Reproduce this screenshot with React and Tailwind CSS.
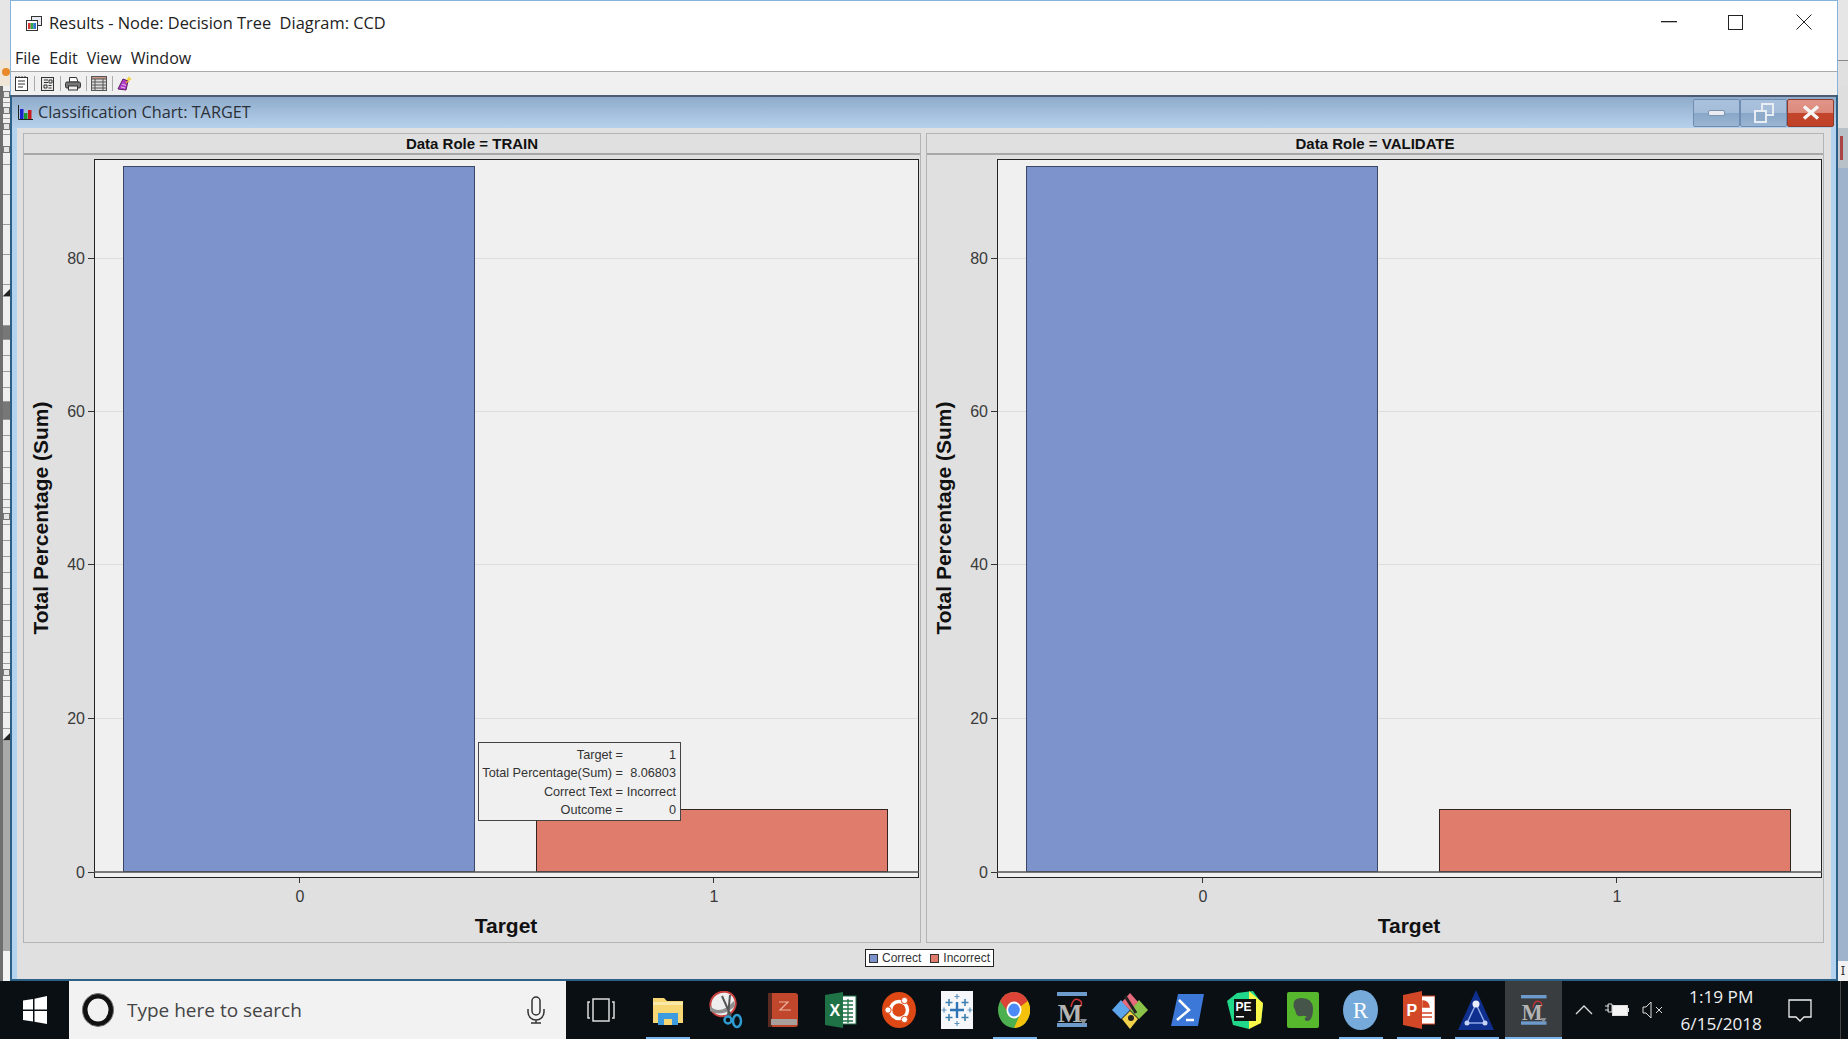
const arial = "font-['Liberation_Sans',Arial,sans-serif]";

const ticks = [
  { label: "80", y: 103 },
  { label: "60", y: 256 },
  { label: "40", y: 409 },
  { label: "20", y: 563 },
  { label: "0", y: 717 },
];

// the chart itself, coordinates are local to the panel body
const Plot = () => (
  <svg width="898" height="787" className="block" fontFamily="'Liberation Sans', Arial, sans-serif">
    <rect x="70.5" y="4.500" width="824" height="718" fill="#f0f0f0" stroke="#222" />
    {ticks.map((t) => (
      <g key={t.label}>
        <line x1="71" x2="894" y1={t.y + 0.5} y2={t.y + 0.5} stroke="#dedede" />
        <line x1="64" x2="70" y1={t.y + 0.5} y2={t.y + 0.5} stroke="#333" />
        <text x="61" y={t.y + 6} textAnchor="end" fontSize="16" fill="#3a3a3a">{t.label}</text>
      </g>
    ))}
    <rect x="99.5" y="11.500" width="351" height="705" fill="#7c94cb" stroke="#3a4766" />
    <rect x="512.5" y="654.500" width="351" height="62" fill="#e07c6c" stroke="#33231f" />
    <line x1="70" x2="895" y1="717" y2="717" stroke="#555" strokeWidth="1.5" />
    <line x1="275.5" x2="275.5" y1="723" y2="728" stroke="#333" />
    <line x1="689.5" x2="689.5" y1="723" y2="728" stroke="#333" />
    <text x="276" y="747" textAnchor="middle" fontSize="16" fill="#3a3a3a">0</text>
    <text x="690" y="747" textAnchor="middle" fontSize="16" fill="#3a3a3a">1</text>
    <text x="482" y="778" textAnchor="middle" fontSize="21" fontWeight="700" fill="#111">Target</text>
    <text transform="translate(24 363) rotate(-90)" textAnchor="middle" fontSize="21" fontWeight="700" fill="#111">Total Percentage (Sum)</text>
  </svg>
);

const Panel = ({ title, children }) => (
  <div className="relative w-[898px] h-[810px] border border-[#b4b4b4] bg-[#e0e0e0]">
    <div className={`h-[21px] border-b-2 border-[#a8a8a8] text-center text-[15px] leading-[20px] font-bold text-[#111] ${arial}`}>
      {title}
    </div>
    <Plot />
    {children}
  </div>
);

const tipRows = [
  ["Target =", "1"],
  ["Total Percentage(Sum) =", "8.06803"],
  ["Correct Text =", "Incorrect"],
  ["Outcome =", "0"],
];

const Tooltip = () => (
  <div className={`absolute left-[454px] top-[608px] w-[203px] h-[79px] border border-[#444] bg-[#f0f0f0] pl-[3px] pr-[4px] pt-[3px] text-[12.7px] leading-[18.4px] text-[#333] ${arial}`}>
    {tipRows.map(([k, v]) => (
      <div key={k} className="flex justify-between">
        <span className="w-[141px] text-right whitespace-nowrap">{k}</span>
        <span>{v}</span>
      </div>
    ))}
  </div>
);

const TitleIcon = () => (
  <svg width="16" height="15" viewBox="0 0 16 15">
    <rect x="5.5" y="0.5" width="10" height="9" fill="#e8ecf2" stroke="#333" />
    <rect x="0.5" y="4.5" width="11" height="10" fill="#fff" stroke="#333" />
    <rect x="2" y="7" width="2.6" height="6" fill="#d33" />
    <rect x="4.6" y="7" width="2.6" height="6" fill="#3a4" />
    <rect x="7.2" y="7" width="2.8" height="6" fill="#37c" />
  </svg>
);

const NoteIcon = () => (
  <svg width="15" height="15" viewBox="0 0 15 15" fill="none" stroke="#333">
    <rect x="1.5" y="1.5" width="12" height="13" fill="#fff" />
    <path d="M2 1V0M5 1V0M8 1V0M11 1V0M4 5h7M4 8h7M4 11h5" />
  </svg>
);
const PageIcon = () => (
  <svg width="15" height="15" viewBox="0 0 15 15" fill="none" stroke="#333">
    <rect x="1.5" y="1.5" width="12" height="13" fill="#e8e8e8" />
    <path d="M4 4h4M4 6.5h4M9 4h3v3H9zM4 9h3v3H4zM8.5 9.5h3M8.5 12h3" />
  </svg>
);
const PrintIcon = () => (
  <svg width="16" height="15" viewBox="0 0 16 15" stroke="#333">
    <path d="M4.5 6V1.5h7L13 6z" fill="#fff" />
    <rect x="0.5" y="6" width="15" height="6" rx="1.5" fill="#777" />
    <rect x="3.5" y="10" width="9" height="4" fill="#eee" />
  </svg>
);
const TableIcon = () => (
  <svg width="16" height="15" viewBox="0 0 16 15" fill="none" stroke="#555">
    <rect x="0.5" y="0.5" width="15" height="14" fill="#ddd" />
    <rect x="0.5" y="0.5" width="15" height="2.5" fill="#c98" />
    <path d="M4 3v11M12 3v11M1 6h14M1 9h14M1 12h14" />
  </svg>
);
const WandIcon = () => (
  <svg width="16" height="16" viewBox="0 0 16 16">
    <path d="M1 13 6 3l5 2-2 9z" fill="#b03bc4" stroke="#5b1a68" />
    <path d="M5 8l4 1.500M4 11l4 1" stroke="#e7c0ef" />
    <path d="M12 0l1 2 2 1-2 1-1 2-1-2-2-1 2-1z" fill="#f3d33b" />
    <path d="M9 7l2-2" stroke="#d9a520" strokeWidth="1.5" />
  </svg>
);

const toolbarIcons = [NoteIcon, PageIcon, PrintIcon, TableIcon, WandIcon];

const ChartIcon = () => (
  <svg width="15" height="15" viewBox="0 0 15 15">
    <path d="M0.5 0v14.500H15" fill="none" stroke="#222" />
    <rect x="2" y="4" width="3.5" height="10" fill="#1a22c8" />
    <rect x="6" y="8" width="3.5" height="6" fill="#1a9a2c" />
    <rect x="10" y="5" width="3.5" height="9" fill="#c81a1a" />
  </svg>
);

const InnerButton = ({ children, red }) => (
  <div className={`flex h-[28px] w-[47px] items-center justify-center rounded-[2px] border ${red ? "border-[#8e3a2a] bg-[linear-gradient(#e09588_0%,#dd8a7c_48%,#c2452c_50%,#bf4128_100%)]" : "border-[#6f8db0] bg-[linear-gradient(#a9c1dc_0%,#a5bdd9_48%,#88a6c8_50%,#9ab5d4_100%)]"}`}>
    {children}
  </div>
);

// one row of the outline tree behind the window
const TreeRow = ({ h = 16, dark, box, arrow }) => (
  <div className={`relative flex items-center justify-center border-b border-[#9a9a9a] ${dark ? "bg-[#777]" : "bg-[#efefef]"}`} style={{ height: h }}>
    {box && <div className="size-[7px] border border-[#777] bg-[#e4e4e4]" />}
    {arrow && <div className="absolute bottom-0 right-0 border-b-[7px] border-l-[7px] border-b-[#222] border-l-transparent" />}
  </div>
);

const plain = (n) => Array.from({ length: n }, () => ({}));

const treeRows = [
  { h: 17, box: true }, { h: 16, box: true }, { h: 16, box: true }, { h: 30, box: true },
  { h: 30 }, { h: 30 }, { h: 30 }, { h: 30 }, { h: 12, arrow: true },
  { h: 29 }, { h: 14, dark: true }, ...plain(3), { h: 14 }, { h: 18, dark: true },
  ...plain(5), { h: 8 }, { h: 17, box: true },
  ...plain(8), { h: 11 }, { h: 17, box: true },
  ...plain(3), { h: 12, arrow: true },
];

// left edge of the IDE that is behind the window
const LeftStrip = () => (
  <div className="flex w-[10px] shrink-0 flex-col bg-[#e9e9e9]">
    <div className="h-[60px] bg-[#e6e6e6]" />
    <div className="h-[26px] bg-[#efe6d8]">
      <div className="ml-[2px] mt-[8px] size-[8px] rounded-full bg-[#e88a2a]" />
    </div>
    <div className="flex flex-1 flex-col overflow-hidden border-l-[3px] border-[#6e6e6e]">
      {treeRows.map((r, i) => <TreeRow key={i} {...r} />)}
      <div className="flex-1 bg-[#a9a9a9]" />
      <div className="h-[30px] shrink-0 bg-[#f3f3f3]" />
    </div>
  </div>
);

const RightStrip = () => (
  <div className="flex w-[10px] shrink-0 flex-col bg-[#e6e6e6]">
    <div className="h-[60px]" />
    <div className="h-[26px] border-t border-[#888] bg-[#e0e0e0]" />
    <div className="h-[42px] bg-[#dedede]" />
    <div className="h-[40px] bg-[#b8c0c8]">
      <div className="mt-[8px] ml-[2px] h-[24px] w-[3px] bg-[#a44]" />
    </div>
    <div className="flex-1 bg-[#9fb4cc]" />
    <div className="h-[20px] bg-[#f2f2f2] text-center text-[13px] leading-[18px] text-[#333]">I</div>
  </div>
);

/* taskbar icons */
const Folder = () => (
  <svg width="32" height="32" viewBox="0 0 32 32">
    <path d="M1 4h11l3 3h16v22H1z" fill="#f7d774" />
    <rect x="1" y="8" width="30" height="3" fill="#fbe9a8" />
    <rect x="6" y="19" width="20" height="12" fill="#3d9be0" />
    <rect x="12" y="25" width="8" height="6" fill="#f7d774" />
  </svg>
);
const Snip = () => (
  <svg width="34" height="38" viewBox="0 0 34 38" fill="none">
    <ellipse cx="14" cy="13" rx="13" ry="12" transform="rotate(-35 14 13)" fill="#eee" stroke="#c9403f" strokeWidth="2" />
    <path d="M1 15q10 10 24-5l1 5q-12 12-25 5z" fill="#8f8f8f" />
    <path d="M13 5l9 20M21 4l-2 21" stroke="#555" strokeWidth="2" />
    <circle cx="19" cy="29" r="3.500" stroke="#2e9ad0" strokeWidth="2.500" />
    <ellipse cx="28" cy="30" rx="4" ry="6" stroke="#2e9ad0" strokeWidth="2.500" />
  </svg>
);
const Book = () => (
  <svg width="32" height="36" viewBox="0 0 32 36">
    <rect x="1" y="1" width="30" height="34" rx="3" fill="#c0462c" />
    <rect x="1" y="1" width="4" height="34" fill="#5b2a20" />
    <rect x="4" y="27" width="26" height="6" fill="#a8a09c" />
    <path d="M12 10h9l-8 8h11" stroke="#eeb4a0" fill="none" strokeWidth="1.200" />
  </svg>
);
const Excel = () => (
  <svg width="32" height="36" viewBox="0 0 32 36">
    <rect x="14" y="4" width="17" height="28" fill="#fff" stroke="#1f7246" />
    <path d="M18 9h10M18 13h10M18 17h10M18 21h10M18 25h10M18 29h10M23 7v24" stroke="#1f7246" strokeWidth="1.300" />
    <path d="M0 3l18-3v36L0 33z" fill="#1f7246" />
    <text x="4.5" y="24" fontSize="16" fontWeight="700" fill="#fff" fontFamily="'Liberation Sans', sans-serif">X</text>
  </svg>
);
const Ubuntu = () => (
  <svg width="34" height="36" viewBox="0 0 34 36">
    <ellipse cx="17" cy="18" rx="17" ry="18" fill="#dd4814" />
    <circle cx="17" cy="18" r="8.500" fill="none" stroke="#fff" strokeWidth="3.500" />
    <circle cx="6" cy="18" r="3.200" fill="#fff" stroke="#dd4814" />
    <circle cx="22.5" cy="8.500" r="3.200" fill="#fff" stroke="#dd4814" />
    <circle cx="22.5" cy="27.500" r="3.200" fill="#fff" stroke="#dd4814" />
  </svg>
);
const Tableau = () => (
  <svg width="32" height="38" viewBox="0 0 32 38">
    <rect width="32" height="38" fill="#f5f7fa" />
    <path d="M16 11v16M9 19h14" stroke="#2f74b5" strokeWidth="2.400" />
    <path d="M8 8v7M4.500 11.500h7M24 8v7M20.500 11.500h7M8 23v7M4.500 26.500h7M24 23v7M20.500 26.500h7" stroke="#3f7fb0" strokeWidth="1.600" />
    <path d="M16 3v5M13.500 5.500h5M16 30v5M13.500 32.500h5M29 16.500v5M26.500 19h5M3 16.500v5M.5 19h5" stroke="#5f93bd" strokeWidth="1.200" />
  </svg>
);
const Chrome = () => (
  <svg width="32" height="36" viewBox="-16 -18 32 36">
    <g transform="scale(1 1.12)">
      <circle r="16" fill="#4caf50" />
      <path d="M-13.900-8A16 16 0 0 1 13.900-8L6 2-6 2z" fill="#db4437" />
      <path d="M13.900-8A16 16 0 0 1 0 16L6 4 6-3z" fill="#f4c20d" />
      <circle r="7.500" fill="#fff" />
      <circle r="5.800" fill="#4c8bf5" />
    </g>
  </svg>
);
const Miner = ({ s = 1 }) => (
  <svg width={30 * s} height={36 * s} viewBox="0 0 30 36">
    <rect width="30" height="4" fill="#6c9bcc" />
    <rect y="31" width="30" height="4" fill="#6c9bcc" />
    <path d="M14 15q2-10 8-7t-2 9" fill="none" stroke="#c33" strokeWidth="1.500" />
    <text x="13" y="30" textAnchor="middle" fontSize="26" fontWeight="700" fill="#b4b4b4" fontFamily="'Liberation Serif', serif">M</text>
    <path d="M23 27h7l-3.500 6z" fill="#8a8f96" />
  </svg>
);
const GitIcon = () => (
  <svg width="36" height="38" viewBox="0 0 36 38">
    <path d="M0 19 9 9 18 19 9 28z" fill="#5da5ea" />
    <path d="M18 19 27 9 36 19 27 28z" fill="#8bc34a" />
    <path d="M18 2 26 11 18 19 10 11z" fill="#e56a7c" />
    <path d="M18 20 26 28 18 38 10 28z" fill="#f1d24a" />
    <path d="M13 5 24 22" stroke="#222" strokeWidth="3" />
    <circle cx="19" cy="27" r="3" fill="#222" />
  </svg>
);
const PowerShell = () => (
  <svg width="33" height="32" viewBox="0 0 33 32">
    <path d="M7 0h26l-6 32H0z" fill="#3c78d8" />
    <path d="M8 6l10 10-12 10" fill="none" stroke="#fff" strokeWidth="2.500" />
    <path d="M15 26h8" stroke="#fff" strokeWidth="2.500" />
  </svg>
);
const PyCharm = () => (
  <svg width="36" height="38" viewBox="0 0 36 38">
    <path d="M0 10 10 2 26 0 36 14 34 30 22 38 6 34z" fill="#21d789" />
    <path d="M22 0 36 12 34 32 22 38z" fill="#fcf84a" />
    <rect x="7" y="8" width="22" height="22" fill="#111" />
    <text x="8.500" y="20" fontSize="12" fontWeight="700" fill="#fff" fontFamily="'Liberation Sans', sans-serif">PE</text>
    <rect x="9" y="25" width="8" height="1.500" fill="#fff" />
  </svg>
);
const Evernote = () => (
  <svg width="32" height="36" viewBox="0 0 32 36">
    <rect width="32" height="36" rx="2" fill="#57b82e" />
    <path d="M7 10q1-4 8-4 10 0 11 10 0 9-3 12-3 2-5 0-1-3 2-3-3-2-5-1-5 1-6-3-1-4-2-5-1-3 0-6z" fill="#46554a" />
  </svg>
);
const RIcon = () => (
  <svg width="35" height="40" viewBox="0 0 35 40">
    <ellipse cx="17.500" cy="20" rx="17.500" ry="20" fill="#75aadb" />
    <text x="17.500" y="28" textAnchor="middle" fontSize="23" fill="#fff" fontFamily="'Liberation Serif', serif">R</text>
  </svg>
);
const Ppt = () => (
  <svg width="32" height="38" viewBox="0 0 32 38">
    <rect x="14" y="5" width="18" height="28" fill="#fff" stroke="#d24726" />
    <path d="M20 10a6 6 0 0 1 6 6h-6zM18 22h11M18 26h11" stroke="#d24726" fill="#d24726" strokeWidth="1.500" />
    <path d="M0 4l19-4v38L0 34z" fill="#d24726" />
    <text x="3.500" y="25" fontSize="16" fontWeight="700" fill="#fff" fontFamily="'Liberation Sans', sans-serif">P</text>
  </svg>
);
const Triangle = () => (
  <svg width="36" height="40" viewBox="0 0 36 40">
    <path d="M18 0 36 40H0z" fill="#0f2f8f" />
    <path d="M18 14 9 33M18 14 27 33M9 33h18" stroke="#8ea8e8" strokeWidth="1.500" />
    <circle cx="18" cy="14" r="3.500" fill="#e8eefc" />
    <circle cx="9" cy="33" r="2.500" fill="#c4d2f4" />
    <circle cx="27" cy="33" r="2.500" fill="#c4d2f4" />
  </svg>
);

const taskApps = [
  { icon: <Folder />, on: true },
  { icon: <Snip /> },
  { icon: <Book /> },
  { icon: <Excel /> },
  { icon: <Ubuntu /> },
  { icon: <Tableau /> },
  { icon: <Chrome />, on: true },
  { icon: <Miner /> },
  { icon: <GitIcon /> },
  { icon: <PowerShell /> },
  { icon: <PyCharm /> },
  { icon: <Evernote /> },
  { icon: <RIcon />, on: true },
  { icon: <Ppt />, on: true },
  { icon: <Triangle />, on: true },
];

const TaskButton = ({ icon, on }) => (
  <div className="relative flex h-full w-[57.75px] items-center justify-center">
    {icon}
    {on && <div className="absolute bottom-0 left-[7px] h-[2px] w-[44px] bg-[#79b6ee]" />}
  </div>
);

const Taskbar = () => (
  <div className="flex h-[58px] items-stretch bg-[#0a0f13]">
    <div className="flex w-[69px] items-center justify-center">
      <svg width="24" height="28" viewBox="0 0 24 28" fill="#fff">
        <path d="M0 4.500 10 3v10.500H0zM11.500 2.800 24 0v13.500H11.500zM0 15h10v10.500L0 24zM11.500 15H24v13l-12.500-2.300z" />
      </svg>
    </div>
    <div className="flex w-[497px] items-center bg-[#f2f2f2]">
      <svg width="34" height="36" viewBox="0 0 34 36" className="ml-[12px]">
        <ellipse cx="17" cy="18" rx="13" ry="14" fill="none" stroke="#111" strokeWidth="5" />
        <ellipse cx="17" cy="18" rx="15.500" ry="16.500" fill="none" stroke="#777" strokeWidth="1" />
      </svg>
      <span className="ml-[12px] flex-1 pt-px font-['Open_Sans',sans-serif] text-[19px] text-[#444]">Type here to search</span>
      <svg width="20" height="28" viewBox="0 0 20 28" fill="none" stroke="#333" strokeWidth="1.500" className="mr-[20px]">
        <rect x="6" y="1" width="8" height="18" rx="4" />
        <path d="M2 13v3a8 8 0 0 0 16 0v-3M10 24v3M5 27h10" />
      </svg>
    </div>
    <div className="flex w-[73px] items-center justify-center pr-[4px]">
      <svg width="28" height="24" viewBox="0 0 28 24" fill="none" stroke="#ddd" strokeWidth="1.500">
        <rect x="6" y="1" width="16" height="22" />
        <path d="M3 4H1v16h2M25 4h2v16h-2" />
      </svg>
    </div>
    {taskApps.map((a, i) => <TaskButton key={i} {...a} />)}
    <div className="relative flex w-[57px] items-center justify-center bg-[#3a3d40]">
      <Miner s={0.85} />
      <div className="absolute inset-x-0 bottom-0 h-[2px] bg-[#79b6ee]" />
    </div>
    <div className="flex flex-1 items-center text-white">
      <svg width="18" height="10" viewBox="0 0 18 10" fill="none" stroke="#ddd" strokeWidth="1.300" className="ml-[13px]">
        <path d="M1 9 9 1l8 8" />
      </svg>
      <svg width="24" height="16" viewBox="0 0 24 16" className="ml-[12px]">
        <path d="M0 4h4M0 8h4M3 2h4v8H3z" stroke="#ddd" fill="none" />
        <rect x="7.500" y="3.500" width="15" height="10" fill="#f4f4f4" stroke="#ddd" />
        <rect x="22" y="6" width="2" height="4" fill="#ddd" />
      </svg>
      <svg width="22" height="20" viewBox="0 0 22 20" fill="none" stroke="#ddd" className="ml-[13px]">
        <path d="M1 7v6h3l5 5V2L4 7zM14 7l6 6M20 7l-6 6" />
      </svg>
      <div className="ml-[5px] flex w-[104px] flex-col items-center font-['Open_Sans',sans-serif] text-[17.2px] leading-[27px] text-[#f0f0f0]">
        <span>1:19 PM</span>
        <span>6/15/2018</span>
      </div>
      <svg width="24" height="24" viewBox="0 0 24 24" fill="none" stroke="#eee" strokeWidth="1.300" className="ml-[15px]">
        <path d="M1 2h22v17h-7l-4 4-4-4H1z" />
      </svg>
      <div className="ml-[28px] h-full w-px bg-[#444]" />
    </div>
  </div>
);

export default function App() {
  return (
    <div className="flex h-[1039px] w-[1848px] flex-col overflow-hidden bg-[#0a0f13]">
      <div className="flex h-[981px]">
        <LeftStrip />
        <div className="flex flex-1 flex-col">
          <div className="h-[72px] border-x border-t border-[#86b3dc] border-b-[#a9a9a9] border-b bg-white text-[#222]">
            <div className="flex h-[44px] items-center pl-[15px]">
              <TitleIcon />
              <span className="ml-[7px] flex-1 whitespace-pre font-['Open_Sans',sans-serif] text-[16.4px]">Results - Node: Decision Tree  Diagram: CCD</span>
              <svg width="16" height="2" className="mb-[2px] mr-[51px]"><rect width="16" height="1.300" fill="#222" /></svg>
              <svg width="15" height="15" className="mb-[2px] mr-[53px]"><rect x=".5" y=".5" width="14" height="14" fill="none" stroke="#222" /></svg>
              <svg width="16" height="16" viewBox="0 0 16 16" className="mb-[2px] mr-[25px]"><path d="M.5.5l15 15M15.500.5l-15 15" stroke="#222" /></svg>
            </div>
            <div className="flex gap-[9px] pl-[4px] font-['Open_Sans',sans-serif] text-[16px] leading-[26px]">
              <span>File</span>
              <span>Edit</span>
              <span>View</span>
              <span>Window</span>
            </div>
          </div>
          <div className="flex h-[23px] items-center border-x border-[#86b3dc] bg-[#f0f0f0] pl-[2px]">
            {toolbarIcons.map((Icon, i) => (
              <div key={i} className="flex h-full w-[26px] items-center">
                <div className="flex w-[16px] justify-center"><Icon /></div>
                {i < 4 && <div className="ml-[5px] h-[15px] w-px bg-[#aaa]" />}
              </div>
            ))}
          </div>
          <div className="flex flex-1 flex-col border-x-2 border-b-2 border-[#2c6086]">
            <div className="flex h-[33px] items-center border-t-2 border-[#4d5c70] bg-[linear-gradient(#8eabcb,#b7d1ec)] pl-[6px] pr-[2px]">
              <ChartIcon />
              <span className="ml-[5px] flex-1 font-['Open_Sans',sans-serif] text-[16.3px] text-[#2b2f36]">Classification Chart: TARGET</span>
              <InnerButton>
                <div className="h-[6px] w-[17px] rounded-[2px] border border-[#7c93ae] bg-[#e9edf2]" />
              </InnerButton>
              <InnerButton>
                <svg width="20" height="20" viewBox="0 0 20 20" fill="none" stroke="#e8edf3" strokeWidth="2">
                  <rect x="8" y="1" width="11" height="11" />
                  <rect x="1" y="8" width="11" height="11" fill="#8fabca" />
                </svg>
              </InnerButton>
              <InnerButton red>
                <svg width="18" height="15" viewBox="0 0 18 15" stroke="#f5f5f5" strokeWidth="3.500">
                  <path d="M2 1.500l14 12M16 1.500l-14 12" />
                </svg>
              </InnerButton>
            </div>
            <div className="flex flex-1 flex-col border-x-[5px] border-[#b4d3ee] bg-[#e0e0e0] pl-[6px] pt-[5px]">
              <div className="flex gap-[5px]">
                <Panel title="Data Role = TRAIN"><Tooltip /></Panel>
                <Panel title="Data Role = VALIDATE" />
              </div>
              <div className="flex justify-center pr-[4px] pt-[6px]">
                <div className={`ml-[9px] flex h-[18px] items-center border border-[#222] bg-white px-[3px] text-[12px] text-[#333] ${arial}`}>
                  <span className="size-[9px] border border-[#333] bg-[#7c94cb]" />
                  <span className="ml-[4px] mr-[9px]">Correct</span>
                  <span className="size-[9px] border border-[#333] bg-[#e07c6c]" />
                  <span className="ml-[4px]">Incorrect</span>
                </div>
              </div>
            </div>
          </div>
        </div>
        <RightStrip />
      </div>
      <Taskbar />
    </div>
  );
}
